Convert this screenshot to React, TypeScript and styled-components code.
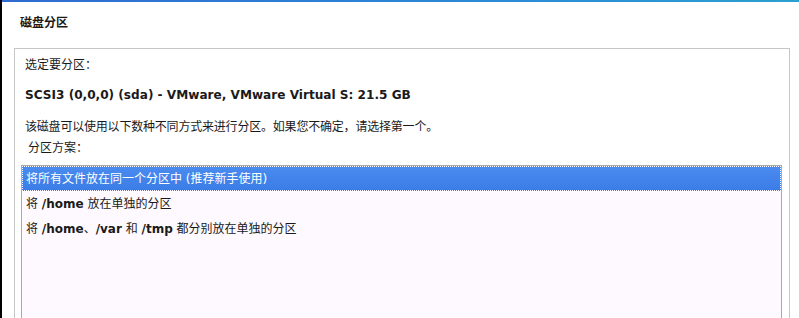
import React, { useState } from 'react'
import styled, { createGlobalStyle } from 'styled-components'

const GlobalStyle = createGlobalStyle`
html, body {
    margin: 0;
    padding: 0;
    background: #ffffff;
}
body {
    font-family: "DejaVu Sans", "Noto Sans CJK SC", sans-serif;
    color: #1a1a1a;
}
`

const Page = styled.div`
display: flex;
width: 799px;
height: 318px;
overflow: hidden;
background: #ffffff;
`

const LeftEdge = styled.div`
width: 2px;
background: #000000;
`

const Main = styled.div`
flex: 1;
display: flex;
flex-direction: column;
`

const TopBar = styled.div`
height: 2px;
background: linear-gradient(to right, #2f6bd2, #2b8fd6 70%, #2aa0cf);
`

const Title = styled.div`
margin: 13px 0 0 18px;
height: 16px;
line-height: 16px;
font-size: 12px;
font-weight: bold;
`

const Frame = styled.div`
flex: 1;
margin: 17px 9px 0 12px;
border: 1px solid #c6c6c6;
border-bottom: none;
padding: 8px 7px 0 6px;
display: flex;
flex-direction: column;
`

const Line = styled.div<{ $top?: number; $indent?: number; $bold?: boolean; $size?: number; $spacing?: number }>`
margin-top: ${p => p.$top ?? 0}px;
margin-left: ${p => p.$indent ?? 4}px;
height: 16px;
line-height: 16px;
font-size: ${p => p.$size ?? 12}px;
font-weight: ${p => (p.$bold ? 'bold' : 'normal')};
letter-spacing: ${p => p.$spacing ?? 0}px;
white-space: nowrap;
`

const ListBox = styled.div`
flex: 1;
margin-top: 9px;
border: 1px solid #a9a9a9;
border-bottom: none;
background: #fdf9fe;
`

const Row = styled.div<{ $selected?: boolean }>`
height: 25px;
box-sizing: border-box;
padding: 2px 0 0 4px;
line-height: 23px;
font-size: 12px;
white-space: nowrap;
color: ${p => (p.$selected ? '#ffffff' : '#1a1a1a')};
background: ${p => (p.$selected ? 'linear-gradient(to bottom, #4b8cf0, #3a7be6)' : 'transparent')};
outline: ${p => (p.$selected ? '1px dotted #ffffff' : 'none')};
outline-offset: -1px;
cursor: default;
`

const Path = styled.b`
font-weight: bold;
`

const schemes = [
    <>将所有文件放在同一个分区中 (推荐新手使用)</>,
    <>将 <Path>/home</Path> 放在单独的分区</>,
    <>将 <Path>/home</Path>、<Path>/var</Path> 和 <Path>/tmp</Path> 都分别放在单独的分区</>,
]

const App: React.FC = () => {
    const [selected, setSelected] = useState(0)
    return (
        <>
            <GlobalStyle />
            <Page>
                <LeftEdge />
                <Main>
                    <TopBar />
                    <Title>磁盘分区</Title>
                    <Frame>
                        <Line>选定要分区：</Line>
                        <Line $top={14} $bold $size={12.1}>SCSI3 (0,0,0) (sda) - VMware, VMware Virtual S: 21.5 GB</Line>
                        <Line $top={16} $spacing={-0.2}>该磁盘可以使用以下数种不同方式来进行分区。如果您不确定，请选择第一个。</Line>
                        <Line $top={5} $indent={7}>分区方案：</Line>
                        <ListBox>
                            {schemes.map((s, i) => (
                                <Row key={i} $selected={i === selected} onClick={() => setSelected(i)}>{s}</Row>
                            ))}
                        </ListBox>
                    </Frame>
                </Main>
            </Page>
        </>
    )
}

export default App
